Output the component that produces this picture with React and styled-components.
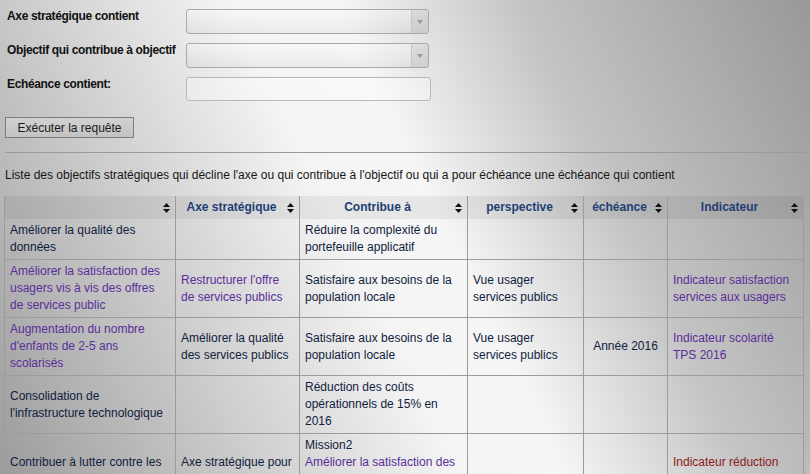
import React from "react";
import styled, { createGlobalStyle } from "styled-components";

const GlobalStyle = createGlobalStyle`
  html, body {
    margin: 0;
    padding: 0;
  }
  body {
    min-height: 100vh;
    font-family: "Liberation Sans", Arial, sans-serif;
    font-size: 12px;
    color: #10213d;
    background: linear-gradient(
      64deg,
      #9c9c9c 0%,
      #c4c4c4 20%,
      #f4f4f4 44%,
      #f6f6f6 54%,
      #c4c4c4 72%,
      #989898 100%
    ) fixed;
  }
`;

const columns = [
  { label: "", width: 171 },
  { label: "Axe stratégique", width: 124 },
  { label: "Contribue à", width: 168 },
  { label: "perspective", width: 116 },
  { label: "échéance", width: 84 },
  { label: "Indicateur", width: 136 },
];

// chaque cellule : texte simple, lien (visité) ou lien rouge
const rows = [
  [
    ["Améliorer la qualité des données"],
    [],
    ["Réduire la complexité du portefeuille applicatif"],
    [],
    [],
    [],
  ],
  [
    [{ link: "Améliorer la satisfaction des usagers vis à vis des offres de services public" }],
    [{ link: "Restructurer l'offre de services publics" }],
    ["Satisfaire aux besoins de la population locale"],
    ["Vue usager services publics"],
    [],
    [{ link: "Indicateur satisfaction services aux usagers" }],
  ],
  [
    [{ link: "Augmentation du nombre d'enfants de 2-5 ans scolarisés" }],
    ["Améliorer la qualité des services publics"],
    ["Satisfaire aux besoins de la population locale"],
    ["Vue usager services publics"],
    [{ center: "Année 2016" }],
    [{ link: "Indicateur scolarité TPS 2016" }],
  ],
  [
    ["Consolidation de l'infrastructure technologique"],
    [],
    ["Réduction des coûts opérationnels de 15% en 2016"],
    [],
    [],
    [],
  ],
  [
    ["Contribuer à lutter contre les fraudes"],
    ["Axe stratégique pour la fraude"],
    ["Mission2", { link: "Améliorer la satisfaction des usagers vis à vis des offres de services public" }],
    [],
    [],
    [{ red: "Indicateur réduction fraudes" }],
  ],
];

const SortIcon = () => (
  <svg width="7" height="10" viewBox="0 0 7 10">
    <path d="M3.5 0 L7 4 L0 4 Z M0 6 L7 6 L3.5 10 Z" fill="#111" />
  </svg>
);

const SelectArrow = () => (
  <svg width="6" height="4" viewBox="0 0 6 4">
    <path d="M0 0 L6 0 L3 4 Z" fill="#9a9a9a" />
  </svg>
);

const renderPart = (part, i) => {
  if (typeof part === "string") return <Line key={i}>{part}</Line>;
  if (part.link) return <Link key={i}>{part.link}</Link>;
  if (part.red) return <Link key={i} $red>{part.red}</Link>;
  return <Line key={i} $center>{part.center}</Line>;
};

const App = () => {
  return (
    <Page>
      <GlobalStyle />
      <Form>
        <Label>Axe stratégique contient</Label>
        <Select>
          <ArrowBox>
            <SelectArrow />
          </ArrowBox>
        </Select>
        <Label>Objectif qui contribue à objectif</Label>
        <Select>
          <ArrowBox>
            <SelectArrow />
          </ArrowBox>
        </Select>
        <Label>Echéance contient:</Label>
        <TextInput type="text" />
      </Form>

      <RunButton>Exécuter la requête</RunButton>

      <Rule />

      <Intro>
        Liste des objectifs stratégiques qui décline l'axe ou qui contribue à
        l'objectif ou qui a pour échéance une échéance qui contient
      </Intro>

      <Table>
        <colgroup>
          {columns.map((c, i) => (
            <col key={i} style={{ width: c.width }} />
          ))}
        </colgroup>
        <thead>
          <tr>
            {columns.map((c, i) => (
              <HeadCell key={i}>
                <HeadInner>
                  <HeadText>{c.label}</HeadText>
                  <SortIcon />
                </HeadInner>
              </HeadCell>
            ))}
          </tr>
        </thead>
        <tbody>
          {rows.map((row, r) => (
            <tr key={r}>
              {row.map((cell, c) => (
                <Cell key={c}>{cell.map(renderPart)}</Cell>
              ))}
            </tr>
          ))}
        </tbody>
      </Table>
    </Page>
  );
};

export default App;

/* styled-components */
const Page = styled.div`
  padding: 9px 5px 0 5px;
  width: 800px;
`;
const Form = styled.div`
  display: grid;
  grid-template-columns: 181px auto;
  justify-content: start;
  align-items: start;
  row-gap: 9px;
`;
const Label = styled.div`
  padding-left: 2px;
  font-weight: 700;
  line-height: 16px;
  letter-spacing: -0.35px;
  margin-top: -1px;
  color: #111;
  white-space: nowrap;
`;
const Select = styled.div`
  width: 241px;
  height: 23px;
  border: 1px solid #a9a9a9;
  border-radius: 3px;
  background: linear-gradient(
    to bottom,
    rgba(255, 255, 255, 0.25),
    rgba(0, 0, 0, 0.04)
  );
  display: flex;
  justify-content: flex-end;
  overflow: hidden;
`;
const ArrowBox = styled.div`
  width: 16px;
  border-left: 1px solid #c4c4c4;
  background: rgba(0, 0, 0, 0.06);
  display: flex;
  align-items: center;
  justify-content: center;
`;
const TextInput = styled.input`
  box-sizing: border-box;
  width: 245px;
  height: 24px;
  margin: 0;
  border: 1px solid #b8b8b8;
  border-radius: 3px;
  background: rgba(255, 255, 255, 0.3);
  outline: none;
`;
const RunButton = styled.button`
  display: block;
  margin-top: 16px;
  width: 129px;
  height: 21px;
  padding: 0;
  border: 1px solid #7c7c7c;
  border-radius: 0;
  background: linear-gradient(to bottom, #d2d2d2, #c2c2c2);
  font-family: "Liberation Sans", Arial, sans-serif;
  font-size: 12px;
  color: #1a1a1a;
`;
const Rule = styled.hr`
  margin: 14px 0 0 0;
  border: 0;
  border-top: 1px solid #9a9a9a;
  height: 0;
`;
const Intro = styled.p`
  margin: 14px 0 0 0;
  line-height: 16px;
  color: #161616;
  white-space: nowrap;
`;
const Table = styled.table`
  margin: 13px 0 0 -1px;
  border-collapse: collapse;
  table-layout: fixed;
  width: 799px;
  border-left: 1px solid #9c9c9c;
`;
const HeadCell = styled.th`
  padding: 3px 5px 3px 5px;
  line-height: 17px;
  background: rgba(0, 0, 0, 0.06);
  border-left: 1px solid #9c9c9c;
  border-right: 1px solid #9c9c9c;
  font-weight: 700;
  color: #1f3f73;
  vertical-align: middle;
`;
const HeadInner = styled.div`
  display: flex;
  align-items: center;
  gap: 5px;
  svg {
    flex-shrink: 0;
  }
`;
const HeadText = styled.span`
  flex: 1;
  text-align: center;
  white-space: nowrap;
`;
const Cell = styled.td`
  padding: 3px 5px;
  line-height: 17px;
  border: 1px solid #9c9c9c;
  vertical-align: middle;
  tr:first-child > & {
    border-top: 0;
  }
`;
const Line = styled.div`
  text-align: ${(p) => (p.$center ? "center" : "left")};
`;
const Link = styled.div`
  color: ${(p) => (p.$red ? "#8a1a1a" : "#5a2e9a")};
`;
